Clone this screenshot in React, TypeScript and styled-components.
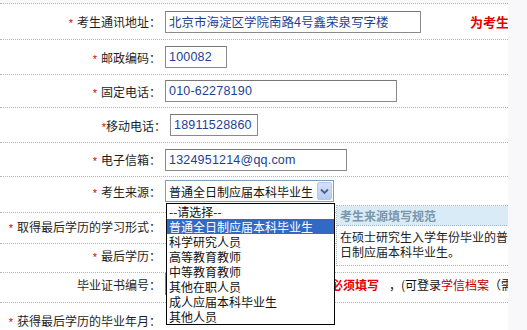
import styled, { createGlobalStyle } from "styled-components";

interface RowProps {
  h: number;
  lift?: number;
}
interface CellProps {
  w?: number;
}
interface InputProps {
  w: number;
}
interface OptionProps {
  active?: boolean;
}

const GlobalStyle = createGlobalStyle`
  html, body {
    margin: 0;
    padding: 0;
    background: #f8f8fb;
    overflow: hidden;
  }
  body {
    font-family: "Noto Sans CJK SC", "Liberation Sans", sans-serif;
    font-size: 12px;
    color: #1a1a1a;
  }
`;

const Page = styled.div`
  width: 527px;
  height: 330px;
  overflow: hidden;
`;

const FormTable = styled.div`
  width: 508px;
  margin-top: 3px;
  background: #fff;
  border-top: 1px dotted #b4b4b4;
  overflow: hidden;
`;

const Row = styled.div<RowProps>`
  display: flex;
  align-items: center;
  height: ${(p) => p.h}px;
  padding-bottom: ${(p) => p.lift || 0}px;
  box-sizing: border-box;
  border-bottom: 1px dotted #b4b4b4;
  white-space: nowrap;
`;

const Label = styled.div<CellProps>`
  flex: none;
  width: ${(p) => p.w || 165}px;
  box-sizing: border-box;
  padding-right: 4px;
  text-align: right;
  font-size: 12px;
  color: #1e1e1e;
`;

const Star = styled.span`
  color: #d40000;
  font-family: "Liberation Sans", sans-serif;
  font-size: 11px;
  margin-right: 4px;
`;

const TightStar = styled(Star)`
  margin-right: 0;
`;

const Field = styled.div`
  position: relative;
  display: flex;
  align-items: center;
`;

const Input = styled.input<InputProps>`
  width: ${(p) => p.w}px;
  height: 22px;
  box-sizing: border-box;
  margin: 0;
  padding: 0 3px;
  border: 1px solid #8a8a8a;
  border-top-color: #777;
  background: #fff;
  color: #1d3f93;
  font-family: "Liberation Sans", "Noto Sans CJK SC", sans-serif;
  font-size: 12.5px;
  letter-spacing: 0.2px;
  outline: none;
`;

const AddressInput = styled(Input)`
  font-family: "Noto Sans CJK SC", "Liberation Sans", sans-serif;
  letter-spacing: 0;
`;

const RedNote = styled.span`
  margin-left: 49px;
  color: #e00000;
  font-weight: bold;
  font-size: 13px;
`;

const SelectBox = styled.div`
  position: relative;
  display: flex;
  align-items: center;
  width: 169px;
  height: 22px;
  box-sizing: border-box;
  border: 1px solid #7f9db9;
  background: #fff;
  padding-left: 3px;
  font-size: 12px;
  color: #111;
`;

const Arrow = styled.span`
  position: absolute;
  right: 1px;
  top: 1px;
  width: 15px;
  height: 18px;
  box-sizing: border-box;
  border: 1px solid #b5c7ef;
  border-radius: 2px;
  background: linear-gradient(#d6e2fb, #b8cbf5);
  display: flex;
  align-items: center;
  justify-content: center;
`;

const OptionList = styled.div`
  position: absolute;
  left: 0;
  top: 22px;
  z-index: 3;
  width: 169px;
  box-sizing: border-box;
  border: 1px solid #000;
  background: #fff;
`;

const Option = styled.div<OptionProps>`
  height: 15px;
  line-height: 15px;
  padding-left: 2px;
  font-size: 12px;
  background: ${(p) => (p.active ? "#316ac5" : "transparent")};
  color: ${(p) => (p.active ? "#fff" : "#111")};
  overflow: hidden;
`;

const Tip = styled.div`
  position: absolute;
  left: 171px;
  top: 25px;
  z-index: 2;
  width: 200px;
  box-sizing: border-box;
  border: 1px dotted #9fb6c6;
  background: #fff;
  overflow: hidden;
`;

const TipHead = styled.div`
  height: 19px;
  line-height: 19px;
  padding-left: 3px;
  background: #d8ebf6;
  border-bottom: 1px dotted #9fb6c6;
  color: #7c96aa;
  font-weight: bold;
  font-size: 12px;
`;

const TipBody = styled.div`
  padding: 3px 3px 6px;
  line-height: 15px;
  font-size: 12px;
  color: #222;
  white-space: normal;
  word-break: break-all;
  height: 30px;
`;

const Hint = styled.span`
  margin-left: 6px;
  font-size: 12px;
  color: #111;
`;

const HintStrong = styled.span`
  color: #e00000;
  font-weight: bold;
  margin-right: 10px;
`;

const HintLink = styled.span`
  color: #b80000;
`;

const sources = [
  "--请选择--",
  "普通全日制应届本科毕业生",
  "科学研究人员",
  "高等教育教师",
  "中等教育教师",
  "其他在职人员",
  "成人应届本科毕业生",
  "其他人员",
];

const App = () => {
  return (
    <Page>
      <GlobalStyle />
      <FormTable>
        <Row h={36}>
          <Label>
            <Star>*</Star>考生通讯地址：
          </Label>
          <Field>
            <AddressInput w={256} readOnly value="北京市海淀区学院南路4号鑫荣泉写字楼" />
            <RedNote>为考生</RedNote>
          </Field>
        </Row>
        <Row h={35}>
          <Label>
            <Star>*</Star>邮政编码：
          </Label>
          <Field>
            <Input w={62} readOnly value="100082" />
          </Field>
        </Row>
        <Row h={33}>
          <Label>
            <Star>*</Star>固定电话：
          </Label>
          <Field>
            <Input w={232} readOnly value="010-62278190" />
          </Field>
        </Row>
        <Row h={35}>
          <Label w={170}>
            <TightStar>*</TightStar>移动电话：
          </Label>
          <Field>
            <Input w={88} readOnly value="18911528860" />
          </Field>
        </Row>
        <Row h={34}>
          <Label>
            <Star>*</Star>电子信箱：
          </Label>
          <Field>
            <Input w={182} readOnly value="1324951214@qq.com" />
          </Field>
        </Row>
        <Row h={36} lift={7}>
          <Label>
            <Star>*</Star>考生来源：
          </Label>
          <Field>
            <SelectBox>
              普通全日制应届本科毕业生
              <Arrow>
                <svg width="9" height="7" viewBox="0 0 9 7">
                  <path d="M1 1.5 L4.5 5 L8 1.5" fill="none" stroke="#4d6185" strokeWidth="1.8" />
                </svg>
              </Arrow>
              <OptionList>
                {sources.map((s, i) => (
                  <Option key={s} active={i === 1}>
                    {s}
                  </Option>
                ))}
              </OptionList>
            </SelectBox>
            <Tip>
              <TipHead>考生来源填写规范</TipHead>
              <TipBody>在硕士研究生入学年份毕业的普通全日制应届本科毕业生。</TipBody>
            </Tip>
          </Field>
        </Row>
        <Row h={31} lift={4}>
          <Label>
            <Star>*</Star>取得最后学历的学习形式：
          </Label>
        </Row>
        <Row h={29} lift={5}>
          <Label>
            <Star>*</Star>最后学历：
          </Label>
        </Row>
        <Row h={30} lift={7}>
          <Label>毕业证书编号：</Label>
          <Field>
            <Input w={160} readOnly value="" />
            <Hint>
              <HintStrong>必须填写</HintStrong>，(可登录<HintLink>学信档案</HintLink>（需要查询）
            </Hint>
          </Field>
        </Row>
        <Row h={36}>
          <Label>
            <Star>*</Star>获得最后学历的毕业年月：
          </Label>
        </Row>
      </FormTable>
    </Page>
  );
};

export default App;
